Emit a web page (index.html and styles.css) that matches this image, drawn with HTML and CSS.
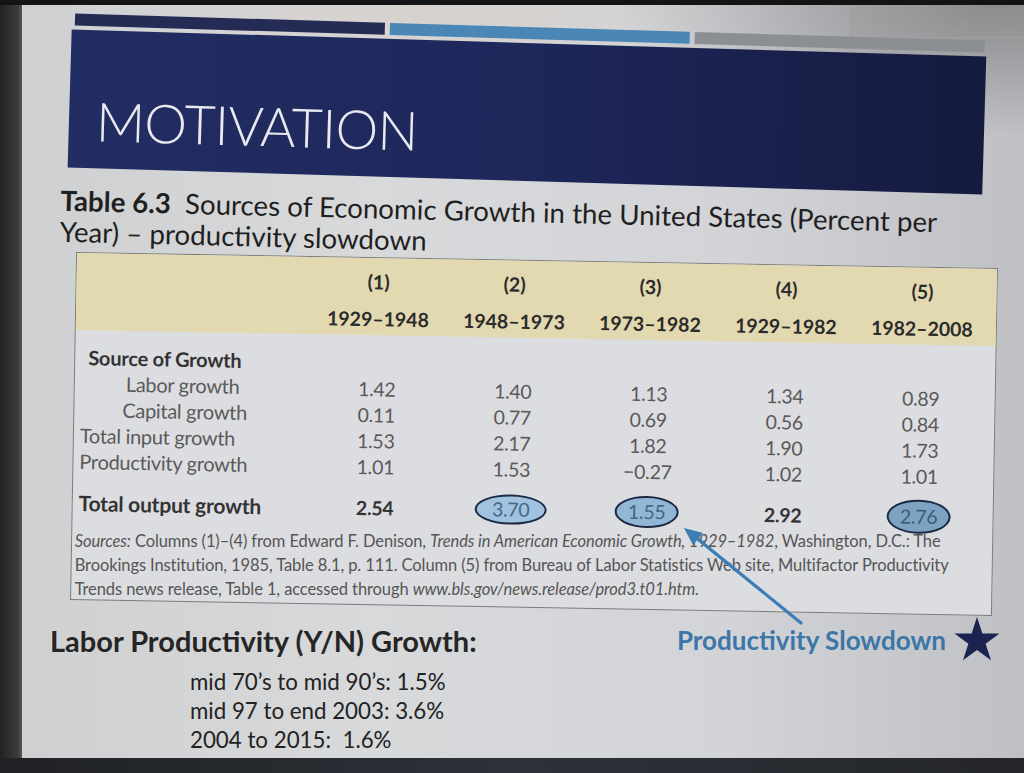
FILE: index.html
```html
<!DOCTYPE html>
<html lang="en">
<head>
<meta charset="utf-8">
<title>Motivation</title>
<link rel="stylesheet" href="styles.css">
</head>
<body>
<div class="frame">
  <div class="left-edge"></div>
  <div class="slide">
    <div class="glare-box"></div>
    <header class="head">
      <div class="bars">
        <span class="bar bar-navy"></span>
        <span class="bar bar-blue"></span>
        <span class="bar bar-gray"></span>
      </div>
      <div class="titlebox">
        <h1 class="title">MOTIVATION</h1>
      </div>
    </header>

    <p class="caption"><b>Table 6.3</b>&nbsp; Sources of Economic Growth in the United States (Percent per<br>Year) – productivity slowdown</p>

    <section class="tablebox">
      <div class="thead">
        <div class="hrow">
          <span></span><span>(1)</span><span>(2)</span><span>(3)</span><span>(4)</span><span>(5)</span>
        </div>
        <div class="hrow">
          <span></span><span>1929–1948</span><span>1948–1973</span><span>1973–1982</span><span>1929–1982</span><span>1982–2008</span>
        </div>
      </div>
      <div class="tbody">
        <div class="row"><span class="lab strong ind1">Source of Growth</span></div>
        <div class="row"><span class="lab ind2">Labor growth</span><span>1.42</span><span>1.40</span><span>1.13</span><span>1.34</span><span>0.89</span></div>
        <div class="row"><span class="lab ind3">Capital growth</span><span>0.11</span><span>0.77</span><span>0.69</span><span>0.56</span><span>0.84</span></div>
        <div class="row"><span class="lab">Total input growth</span><span>1.53</span><span>2.17</span><span>1.82</span><span>1.90</span><span>1.73</span></div>
        <div class="row"><span class="lab">Productivity growth</span><span>1.01</span><span>1.53</span><span>−0.27</span><span>1.02</span><span>1.01</span></div>
        <div class="row total"><span class="lab strong">Total output growth</span><span>2.54</span><span><em class="ring ring-a">3.70</em></span><span><em class="ring ring-b">1.55</em></span><span>2.92</span><span><em class="ring ring-c">2.76</em></span></div>
        <p class="sources"><i>Sources:</i> Columns (1)–(4) from Edward F. Denison, <i>Trends in American Economic Growth, 1929–1982</i>, Washington, D.C.: The<br>Brookings Institution, 1985, Table 8.1, p. 111. Column (5) from Bureau of Labor Statistics Web site, Multifactor Productivity<br>Trends news release, Table 1, accessed through <i>www.bls.gov/news.release/prod3.t01.htm.</i></p>
      </div>
    </section>

    <section class="bottom">
      <div class="labor">
        <h2 class="labor-title">Labor Productivity (Y/N) Growth:</h2>
        <ul class="labor-list">
          <li>mid 70’s to mid 90’s: 1.5%</li>
          <li>mid 97 to end 2003: 3.6%</li>
          <li>2004 to 2015:&nbsp; 1.6%</li>
        </ul>
      </div>
      <div class="slowdown">
        <span class="slowdown-text">Productivity Slowdown</span>
        <svg class="star" viewBox="0 0 48 50" width="46" height="48" aria-hidden="true">
          <polygon points="24,1 29.6,18.2 47.5,18.2 33,28.8 38.6,46 24,35.4 9.4,46 15,28.8 0.5,18.2 18.4,18.2" fill="#1b2450"/>
        </svg>
      </div>
    </section>

    <svg class="arrow" width="1002" height="753" viewBox="0 0 1002 753" aria-hidden="true">
      <line x1="779" y1="618" x2="672" y2="531" stroke="#3d7db5" stroke-width="3.2" stroke-linecap="round"/>
      <polygon points="662,523 681,528 671,540" fill="#3d7db5"/>
    </svg>
  </div>
  <div class="bottom-band"></div>
</div>
</body>
</html>
```

FILE: styles.css
```css
* { box-sizing: border-box; }

html, body {
  margin: 0;
  padding: 0;
  background: #1c1c1c;
}

.frame {
  width: 1024px;
  height: 773px;
  position: relative;
  overflow: hidden;
  background: #141414;
  padding-top: 5px;
  padding-left: 22px;
}

.left-edge {
  position: absolute;
  left: 0;
  top: 5px;
  width: 22px;
  height: 768px;
  background: linear-gradient(90deg, #232323, #3a3a3a 80%, #555 100%);
}

.slide {
  position: relative;
  width: 1002px;
  height: 753px;
  overflow: hidden;
  font-family: "Lato", "Open Sans", sans-serif;
  background:
    radial-gradient(ellipse 380px 130px at 97% 0%, rgba(100, 100, 102, 0.6), rgba(100, 100, 102, 0) 100%),
    radial-gradient(ellipse 300px 80px at 40% 0%, rgba(210, 190, 170, 0.3), rgba(210, 190, 170, 0) 100%),
    linear-gradient(90deg, #cfd0d2 0%, #d8d9db 35%, #d3d4d7 70%, #bfc0c3 100%);
}

.glare-box {
  position: absolute;
  left: 828px;
  top: 0;
  width: 190px;
  height: 33px;
  border-left: 1px solid #a0a0a0;
  border-bottom: 1px solid #a0a0a0;
  background: rgba(150, 150, 150, 0.25);
}

/* ---------- Title block ---------- */
.head {
  margin-left: 48px;
  width: 915px;
  padding-top: 22px;
  transform: rotate(1.7deg);
  transform-origin: 50% 50%;
}

.bars {
  display: flex;
  gap: 5px;
  padding-left: 3px;
  height: 12px;
  margin-bottom: 4px;
}

.bar { display: block; height: 12px; }
.bar-navy { width: 310px; background: #242c55; }
.bar-blue { width: 300px; background: #4a86b6; }
.bar-gray { width: 290px; background: #8b8e93; }

.titlebox {
  height: 138px;
  background: linear-gradient(90deg, #222d63 0%, #1d275a 50%, #151a3f 100%);
  padding-left: 27px;
  padding-top: 64px;
}

.title {
  margin: 0;
  font-family: "Lato", sans-serif;
  font-weight: 300;
  font-size: 54px;
  line-height: 1;
  letter-spacing: -0.6px;
  color: #e9e9ef;
}

/* ---------- Caption ---------- */
.caption {
  margin: 15px 0 0 38px;
  width: 920px;
  font-size: 27.7px;
  line-height: 31px;
  color: #1f1f1f;
  transform: rotate(1.4deg);
  transform-origin: 50% 50%;
}

.caption b { font-weight: 700; }

/* ---------- Table ---------- */
.tablebox {
  margin: 2px 0 0 51px;
  width: 922px;
  border: 1.5px solid #7c7c7c;
  background: #dcdde0;
  transform: rotate(1deg);
  transform-origin: 50% 50%;
  color: #585858;
}

.thead {
  background: #e3d9b1;
  height: 77px;
  padding: 10px 0 0 6px;
  display: flex;
  flex-direction: column;
  gap: 11px;
}

.hrow, .row {
  display: grid;
  grid-template-columns: 228px repeat(5, 136px);
  align-items: center;
  height: 26px;
}

.hrow span {
  text-align: center;
  font-weight: 700;
  font-size: 19.5px;
  color: #2b2b2b;
}

.tbody {
  padding: 14px 0 6px 6px;
}

.row span {
  text-align: center;
  font-size: 19.5px;
  color: #5a5a5a;
  letter-spacing: -0.3px;
}

.row .lab {
  text-align: left;
  font-size: 20px;
  white-space: nowrap;
}

.row .strong {
  font-weight: 700;
  color: #333;
  letter-spacing: -0.2px;
}

.row.total .lab.strong {
  font-size: 21px;
}

.ind1 { padding-left: 7px; }
.ind2 { padding-left: 45px; }
.ind3 { padding-left: 42px; }

.row.total { margin-top: 11px; }

.row.total span:not(.lab) {
  font-weight: 700;
  color: #333;
}

.ring {
  display: inline-block;
  font-style: normal;
  font-weight: 400;
  border: 2.5px solid #1b2a45;
  border-radius: 50%;
  line-height: 24px;
}

.ring-a { padding: 1px 15px; background: #a2c3df; color: #46678a; }
.ring-b { padding: 2px 11px; background: #92b7d6; color: #43658a; }
.ring-c { padding: 3px 11px; background: #7ea2c2; color: #3c5d7f; }

.sources {
  margin: 10px 0 0 -3px;
  font-size: 16.5px;
  line-height: 24px;
  color: #555;
  letter-spacing: -0.1px;
  white-space: nowrap;
  transform: rotate(-1deg);
  transform-origin: 50% 50%;
}

/* ---------- Bottom ---------- */
.bottom {
  display: flex;
  justify-content: space-between;
  align-items: flex-start;
  margin-top: 16px;
  padding-left: 28px;
  padding-right: 24px;
}

.labor-title {
  margin: 0;
  font-size: 29px;
  line-height: 34px;
  font-weight: 700;
  color: #252525;
}

.labor-list {
  list-style: none;
  margin: 9px 0 0 140px;
  padding: 0;
}

.labor-list li {
  font-size: 22.3px;
  line-height: 29px;
  color: #222;
}

.slowdown {
  display: flex;
  align-items: center;
  gap: 8px;
  margin-top: -8px;
}

.slowdown-text {
  font-size: 26px;
  font-weight: 700;
  color: #3b76a8;
}

.star { display: block; }

.arrow {
  position: absolute;
  left: 0;
  top: 0;
  pointer-events: none;
}

.bottom-band {
  position: absolute;
  left: 0;
  bottom: 0;
  width: 1024px;
  height: 15px;
  background: linear-gradient(90deg, #1f2125, #2e3138 50%, #24262b);
}
```
